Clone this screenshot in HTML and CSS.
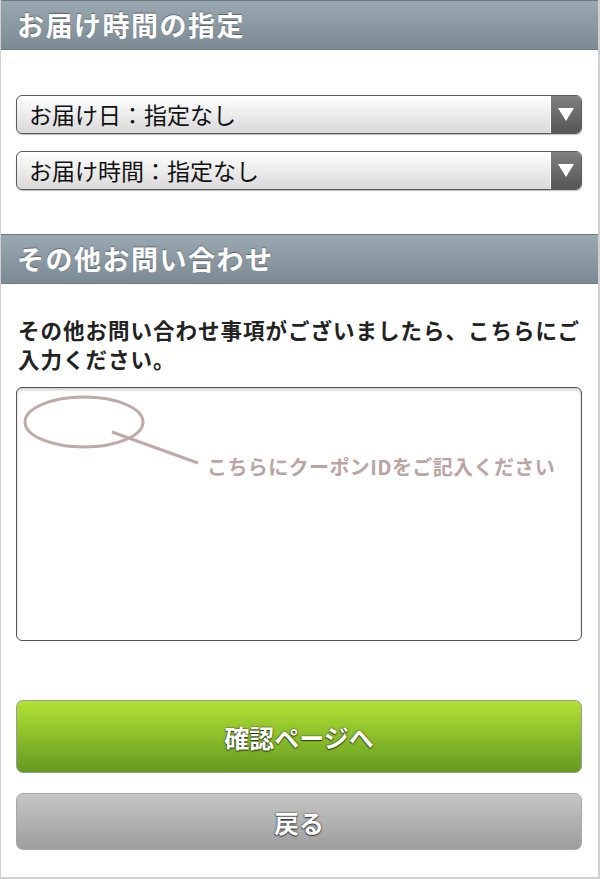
FILE: index.html
```html
<!DOCTYPE html>
<html lang="ja">
<head>
    <meta charset="UTF-8">
    <meta name="viewport" content="width=device-width, initial-scale=1.0">
    <title>お届け時間の指定</title>
    <link rel="stylesheet" href="styles.css">
</head>
<body>
    <div class="pagina">
        <h2 class="titulo">お届け時間の指定</h2>
        <div class="bloque bloque-selects">
            <div class="select">
                <span class="select-texto">お届け日：指定なし</span>
                <span class="select-flecha"></span>
            </div>
            <div class="select">
                <span class="select-texto">お届け時間：指定なし</span>
                <span class="select-flecha"></span>
            </div>
        </div>

        <h2 class="titulo">その他お問い合わせ</h2>
        <div class="bloque bloque-consulta">
            <p class="aviso">その他お問い合わせ事項がございましたら、こちらにご入力ください。</p>
            <div class="caja-texto">
                <textarea name="consulta"></textarea>
                <div class="nota">
                    <svg width="200" height="90" viewBox="0 0 200 90">
                        <ellipse cx="68" cy="35" rx="59" ry="25" fill="none" stroke="#c0aaa7" stroke-width="3"/>
                        <line x1="96" y1="45" x2="182" y2="76" stroke="#c0aaa7" stroke-width="3"/>
                    </svg>
                    <span class="nota-texto">こちらにクーポンIDをご記入ください</span>
                </div>
            </div>
        </div>

        <div class="botones">
            <button class="boton boton-verde">確認ページへ</button>
            <button class="boton boton-gris">戻る</button>
        </div>
    </div>
</body>
</html>
```

FILE: styles.css
```css
body {
    margin: 0;
    font-family: "Noto Sans CJK JP", "Noto Sans", sans-serif;
    background: #fff;
}
.pagina {
    width: 597px;
    height: 877px;
    border-left: 1px solid #d0d0d0;
    border-right: 2px solid #d0d0d0;
    border-bottom: 2px solid #d0d0d0;
    overflow: hidden;
}
.titulo {
    margin: 0;
    height: 48px;
    padding-left: 16px;
    border-top: 1px solid #6d7a83;
    border-bottom: 1px solid #6f7c85;
    background: linear-gradient(#9aa8b2, #7c8a94);
    color: #fff;
    font-size: 27px;
    font-weight: bold;
    line-height: 47px;
    letter-spacing: 1.5px;
    text-shadow: 0 -1px 1px rgba(0, 0, 0, 0.35);
}
.bloque {
    padding: 0 16px 0 15px;
}
.bloque-selects {
    padding-top: 45px;
    padding-bottom: 44px;
    display: flex;
    flex-direction: column;
    gap: 17px;
}
.select {
    display: flex;
    height: 37px;
    border: 1px solid #5a5a5a;
    border-radius: 6px;
    overflow: hidden;
    background: linear-gradient(#ffffff, #d9d9d9);
    box-shadow: 0 1px 1px rgba(0, 0, 0, 0.25);
}
.select-texto {
    flex: 1;
    padding-left: 12px;
    font-size: 23px;
    line-height: 37px;
    color: #111;
}
.select-flecha {
    width: 30px;
    border-left: 1px solid #fff;
    background: linear-gradient(#808080, #555);
    display: flex;
    align-items: center;
    justify-content: center;
}
.select-flecha::after {
    content: "";
    border-left: 8px solid transparent;
    border-right: 8px solid transparent;
    border-top: 13px solid #fff;
}
.bloque-consulta {
    padding-top: 31px;
}
.aviso {
    margin: 0 0 14px 2px;
    font-size: 21.5px;
    font-weight: bold;
    line-height: 29px;
    letter-spacing: 1px;
    color: #222;
}
.caja-texto {
    position: relative;
}
textarea {
    display: block;
    width: 100%;
    height: 254px;
    box-sizing: border-box;
    border: 1px solid #555;
    border-radius: 6px;
    box-shadow: inset 0 2px 3px rgba(0, 0, 0, 0.2);
    resize: none;
}
.nota {
    position: absolute;
    left: 0;
    top: 0;
}
.nota svg {
    display: block;
}
.nota-texto {
    position: absolute;
    left: 191px;
    top: 65px;
    white-space: nowrap;
    font-size: 20px;
    font-weight: bold;
    letter-spacing: 0.4px;
    color: #bba5a2;
}
.botones {
    padding: 59px 16px 0 15px;
    display: flex;
    flex-direction: column;
    gap: 20px;
}
.boton {
    width: 100%;
    border-radius: 7px;
    font-family: inherit;
    font-size: 25px;
    font-weight: bold;
    color: #fff;
    text-shadow: 0 0 2px rgba(0, 0, 0, 0.8), 0 1px 1px rgba(0, 0, 0, 0.6);
}
.boton-verde {
    height: 73px;
    border: 1px solid #9a9a9a;
    background: linear-gradient(#b2e235, #649a1f);
}
.boton-gris {
    height: 57px;
    border: 1px solid #a8a8a8;
    background: linear-gradient(#c6c6c6, #9d9d9d);
}
```
